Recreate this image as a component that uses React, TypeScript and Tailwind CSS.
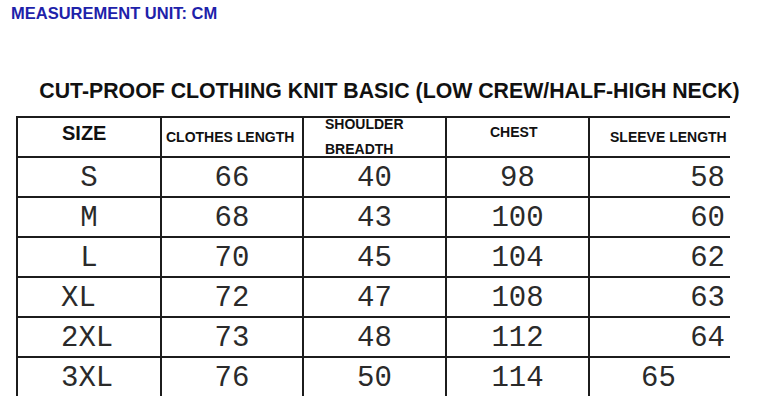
const rows = [
  { size: "S", len: "66", sh: "40", chest: "98", sleeve: "58" },
  { size: "M", len: "68", sh: "43", chest: "100", sleeve: "60" },
  { size: "L", len: "70", sh: "45", chest: "104", sleeve: "62" },
  { size: "XL", len: "72", sh: "47", chest: "108", sleeve: "63" },
  { size: "2XL", len: "73", sh: "48", chest: "112", sleeve: "64" },
  { size: "3XL", len: "76", sh: "50", chest: "114", sleeve: "65" },
];

const cols = "grid grid-cols-[144px_142px_143px_143px_142px]";
const head = "block font-['Liberation_Sans',Arial,sans-serif] font-bold text-[14px] leading-[16px] text-[#111]";
const cell = "border-l-2 border-t-2 border-[#1c1c1c] h-[40px]";
const num = "font-['Liberation_Mono','Courier_New',monospace] text-[29px] leading-[35px] pt-[3px] text-[#2a2a2a]";

export default function App() {
  return (
    <div className="w-[779px] h-[410px] bg-white overflow-hidden">
      <p className="pl-[11px] pt-[3px] font-['Liberation_Sans',Arial,sans-serif] font-bold text-[16.5px] leading-[20px] text-[#1e22aa]">
        MEASUREMENT UNIT: CM
      </p>

      <h1 className="mt-[56px] text-center font-['Liberation_Sans',Arial,sans-serif] font-bold text-[21.3px] leading-[24px] text-[#111]">
        CUT-PROOF CLOTHING KNIT BASIC (LOW CREW/HALF-HIGH NECK)
      </h1>

      <div className="ml-[16px] mt-[13px] w-[714px]">
        <div className={cols}>
          <div className={`${cell} pt-[4px] pl-[44px]`}>
            <span className="block font-['Liberation_Sans',Arial,sans-serif] font-bold text-[20px] leading-[22px] text-[#111]">SIZE</span>
          </div>
          <div className={`${cell} pt-[11px] pl-[4px]`}>
            <span className={head}>CLOTHES LENGTH</span>
          </div>
          <div className={`${cell} pl-[21px] flex flex-col`}>
            <span className={`${head} -mt-[2px]`}>SHOULDER</span>
            <span className={`${head} mt-[9px]`}>BREADTH</span>
          </div>
          <div className={`${cell} pt-[6px] pl-[43px]`}>
            <span className={head}>CHEST</span>
          </div>
          <div className={`${cell} pt-[11px] pl-[20px]`}>
            <span className={head}>SLEEVE LENGTH</span>
          </div>
        </div>

        {rows.map((r, i) => (
          <div key={r.size} className={cols}>
            <div className={`${cell} ${num} ${r.size.length > 1 ? "pl-[43px]" : "text-center"}`}>{r.size}</div>
            <div className={`${cell} ${num} text-center`}>{r.len}</div>
            <div className={`${cell} ${num} text-center`}>{r.sh}</div>
            <div className={`${cell} ${num} text-center`}>{r.chest}</div>
            <div className={`${cell} ${num} ${i === rows.length - 1 ? "pl-[51px]" : "text-right pr-[5px]"}`}>{r.sleeve}</div>
          </div>
        ))}
      </div>
    </div>
  );
}
